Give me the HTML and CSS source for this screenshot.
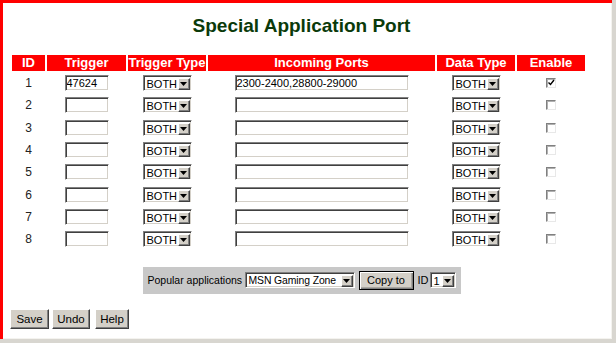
FILE: index.html
```html
<!DOCTYPE html>
<html>
<head>
<meta charset="utf-8">
<title>Special Application Port</title>
<link rel="stylesheet" href="styles.css">
</head>
<body>
<div class="window">
  <div class="frame">
    <div class="content">
      <h1 class="title">Special Application Port</h1>
      <table class="ports">
        <thead>
          <tr>
            <th class="c-id">ID</th>
            <th class="c-trig">Trigger</th>
            <th class="c-tt">Trigger Type</th>
            <th class="c-ip">Incoming Ports</th>
            <th class="c-dt">Data Type</th>
            <th class="c-en">Enable</th>
          </tr>
        </thead>
        <tbody>
          <tr>
            <td>1</td>
            <td><input class="txt trig" type="text" value="47624"></td>
            <td><span class="sel type"><span class="val">BOTH</span><span class="arrow"><svg width="7" height="4" viewBox="0 0 7 4"><path d="M0 0h7L3.5 4z" fill="#000"/></svg></span></span></td>
            <td><input class="txt ports-in" type="text" value="2300-2400,28800-29000"></td>
            <td><span class="sel type"><span class="val">BOTH</span><span class="arrow"><svg width="7" height="4" viewBox="0 0 7 4"><path d="M0 0h7L3.5 4z" fill="#000"/></svg></span></span></td>
            <td><span class="chk"><svg width="8" height="8" viewBox="0 0 8 8"><path d="M1.5 3.5l2 2 3.5-4.5" fill="none" stroke="#000" stroke-width="1.4"/></svg></span></td>
          </tr>
          <tr>
            <td>2</td>
            <td><input class="txt trig" type="text" value=""></td>
            <td><span class="sel type"><span class="val">BOTH</span><span class="arrow"><svg width="7" height="4" viewBox="0 0 7 4"><path d="M0 0h7L3.5 4z" fill="#000"/></svg></span></span></td>
            <td><input class="txt ports-in" type="text" value=""></td>
            <td><span class="sel type"><span class="val">BOTH</span><span class="arrow"><svg width="7" height="4" viewBox="0 0 7 4"><path d="M0 0h7L3.5 4z" fill="#000"/></svg></span></span></td>
            <td><span class="chk"></span></td>
          </tr>
          <tr>
            <td>3</td>
            <td><input class="txt trig" type="text" value=""></td>
            <td><span class="sel type"><span class="val">BOTH</span><span class="arrow"><svg width="7" height="4" viewBox="0 0 7 4"><path d="M0 0h7L3.5 4z" fill="#000"/></svg></span></span></td>
            <td><input class="txt ports-in" type="text" value=""></td>
            <td><span class="sel type"><span class="val">BOTH</span><span class="arrow"><svg width="7" height="4" viewBox="0 0 7 4"><path d="M0 0h7L3.5 4z" fill="#000"/></svg></span></span></td>
            <td><span class="chk"></span></td>
          </tr>
          <tr>
            <td>4</td>
            <td><input class="txt trig" type="text" value=""></td>
            <td><span class="sel type"><span class="val">BOTH</span><span class="arrow"><svg width="7" height="4" viewBox="0 0 7 4"><path d="M0 0h7L3.5 4z" fill="#000"/></svg></span></span></td>
            <td><input class="txt ports-in" type="text" value=""></td>
            <td><span class="sel type"><span class="val">BOTH</span><span class="arrow"><svg width="7" height="4" viewBox="0 0 7 4"><path d="M0 0h7L3.5 4z" fill="#000"/></svg></span></span></td>
            <td><span class="chk"></span></td>
          </tr>
          <tr>
            <td>5</td>
            <td><input class="txt trig" type="text" value=""></td>
            <td><span class="sel type"><span class="val">BOTH</span><span class="arrow"><svg width="7" height="4" viewBox="0 0 7 4"><path d="M0 0h7L3.5 4z" fill="#000"/></svg></span></span></td>
            <td><input class="txt ports-in" type="text" value=""></td>
            <td><span class="sel type"><span class="val">BOTH</span><span class="arrow"><svg width="7" height="4" viewBox="0 0 7 4"><path d="M0 0h7L3.5 4z" fill="#000"/></svg></span></span></td>
            <td><span class="chk"></span></td>
          </tr>
          <tr>
            <td>6</td>
            <td><input class="txt trig" type="text" value=""></td>
            <td><span class="sel type"><span class="val">BOTH</span><span class="arrow"><svg width="7" height="4" viewBox="0 0 7 4"><path d="M0 0h7L3.5 4z" fill="#000"/></svg></span></span></td>
            <td><input class="txt ports-in" type="text" value=""></td>
            <td><span class="sel type"><span class="val">BOTH</span><span class="arrow"><svg width="7" height="4" viewBox="0 0 7 4"><path d="M0 0h7L3.5 4z" fill="#000"/></svg></span></span></td>
            <td><span class="chk"></span></td>
          </tr>
          <tr>
            <td>7</td>
            <td><input class="txt trig" type="text" value=""></td>
            <td><span class="sel type"><span class="val">BOTH</span><span class="arrow"><svg width="7" height="4" viewBox="0 0 7 4"><path d="M0 0h7L3.5 4z" fill="#000"/></svg></span></span></td>
            <td><input class="txt ports-in" type="text" value=""></td>
            <td><span class="sel type"><span class="val">BOTH</span><span class="arrow"><svg width="7" height="4" viewBox="0 0 7 4"><path d="M0 0h7L3.5 4z" fill="#000"/></svg></span></span></td>
            <td><span class="chk"></span></td>
          </tr>
          <tr>
            <td>8</td>
            <td><input class="txt trig" type="text" value=""></td>
            <td><span class="sel type"><span class="val">BOTH</span><span class="arrow"><svg width="7" height="4" viewBox="0 0 7 4"><path d="M0 0h7L3.5 4z" fill="#000"/></svg></span></span></td>
            <td><input class="txt ports-in" type="text" value=""></td>
            <td><span class="sel type"><span class="val">BOTH</span><span class="arrow"><svg width="7" height="4" viewBox="0 0 7 4"><path d="M0 0h7L3.5 4z" fill="#000"/></svg></span></span></td>
            <td><span class="chk"></span></td>
          </tr>
        </tbody>
      </table>
      <div class="popular">
        <span class="pop-label">Popular applications</span>
        <span class="sel app"><span class="val">MSN Gaming Zone</span><span class="arrow"><svg width="7" height="4" viewBox="0 0 7 4"><path d="M0 0h7L3.5 4z" fill="#000"/></svg></span></span>
        <button class="btn copy" type="button">Copy to</button>
        <span class="id-label">ID</span>
        <span class="sel idsel"><span class="val">1</span><span class="arrow"><svg width="7" height="4" viewBox="0 0 7 4"><path d="M0 0h7L3.5 4z" fill="#000"/></svg></span></span>
      </div>
    </div>
    <div class="actions">
      <button class="btn act save" type="button">Save</button>
      <button class="btn act undo" type="button">Undo</button>
      <button class="btn act help" type="button">Help</button>
    </div>
  </div>
</div>
</body>
</html>
```

FILE: styles.css
```css
html, body {
  margin: 0;
  padding: 0;
  background: #fff;
}

body {
  font-family: "Liberation Sans", Arial, sans-serif;
}

.window {
  width: 616px;
  height: 343px;
  box-sizing: border-box;
  border-right: 4px solid #d8d6d0;
  border-bottom: 4px solid #d8d6d0;
  box-shadow: inset -1px -1px 0 #f4f3ef;
}

.frame {
  height: 100%;
  box-sizing: border-box;
  border-top: 3px solid #ff0000;
  border-left: 3px solid #ff0000;
}

.content {
  width: 583px;
  margin-left: 7px;
}

.title {
  margin: 0;
  padding-top: 12px;
  font-size: 19px;
  line-height: 22px;
  font-weight: bold;
  color: #0a3a0a;
  text-align: center;
}

.ports {
  margin-top: 16px;
  border-collapse: separate;
  border-spacing: 2px;
  table-layout: fixed;
  width: 577px;
}

.ports th {
  background: #ff0000;
  color: #fff;
  font-size: 13px;
  font-weight: bold;
  line-height: 16px;
  height: 16px;
  padding: 0;
  text-align: center;
  white-space: nowrap;
}

.c-id { width: 33px; }
.c-trig { width: 79px; }
.c-tt { width: 78px; }
.c-ip { width: 227px; }
.c-dt { width: 78px; }
.c-en { width: 68px; }

.ports td {
  height: 20.33px;
  padding: 0;
  text-align: center;
  vertical-align: middle;
  font-size: 12px;
  color: #222;
}

.txt {
  display: block;
  margin: 0 auto;
  box-sizing: border-box;
  height: 16px;
  padding: 0 1px;
  border: 1px solid;
  border-color: #808080 #ffffff #ffffff #808080;
  box-shadow: inset 1px 1px 0 #404040, inset -1px -1px 0 #d4d0c8;
  background: #fff;
  font-family: "Liberation Sans", Arial, sans-serif;
  font-size: 11px;
  color: #000;
  outline: none;
}

.trig { width: 44px; }
.ports-in { width: 174px; }

.sel {
  display: flex;
  box-sizing: border-box;
  height: 16px;
  border: 1px solid;
  border-color: #808080 #ffffff #ffffff #808080;
  box-shadow: inset 1px 1px 0 #404040, inset -1px -1px 0 #d4d0c8;
  background: #fff;
  padding: 2px 1px 1px 2px;
  text-align: left;
}

.sel .val {
  flex: 1;
  min-width: 0;
  font-size: 11px;
  line-height: 12px;
  color: #000;
  padding-left: 1px;
  white-space: nowrap;
  overflow: hidden;
}

.sel .arrow {
  flex: none;
  width: 12px;
  height: 12px;
  box-sizing: border-box;
  background: #d4d0c8;
  border: 1px solid;
  border-color: #ffffff #404040 #404040 #ffffff;
  box-shadow: inset -1px -1px 0 #808080;
  display: flex;
  align-items: center;
  justify-content: center;
}

.sel .arrow svg {
  display: block;
  margin: 0 1px 0 0;
}

.type {
  width: 49px;
  margin: 0 auto;
}

.chk {
  display: block;
  margin: 0 auto;
  width: 10px;
  height: 10px;
  box-sizing: border-box;
  border: 1px solid;
  border-color: #808080 #e8e8e8 #e8e8e8 #808080;
  box-shadow: inset 1px 1px 0 #b0b0b0;
  background: #fff;
}

.chk svg {
  display: block;
  margin: 0;
}

.popular {
  display: flex;
  align-items: center;
  box-sizing: border-box;
  width: 318px;
  height: 27px;
  margin: 15px auto 0;
  padding-left: 5px;
  background: #c8c8c8;
  font-size: 10.5px;
  color: #000;
}

.pop-label {
  white-space: nowrap;
  width: 97px;
}

.app {
  width: 110px;
}

.app .val {
  font-size: 10.4px;
  letter-spacing: -0.1px;
}

.btn {
  font-family: "Liberation Sans", Arial, sans-serif;
  background: #d4d0c8;
  color: #000;
  border: 1px solid;
  border-color: #ffffff #404040 #404040 #ffffff;
  box-shadow: inset -1px -1px 0 #808080;
  padding: 0;
  margin: 0;
  cursor: default;
}

.copy {
  margin-left: 4px;
  width: 55px;
  height: 19px;
  font-size: 11px;
  border: 1px solid #000;
  box-shadow: inset 1px 1px 0 #ffffff, inset -1px -1px 0 #808080, inset -2px -2px 0 #a8a6a0;
}

.id-label {
  margin-left: 4px;
  font-size: 11px;
  width: 12px;
}

.idsel {
  width: 26px;
}

.actions {
  display: flex;
  gap: 3px;
  margin-top: 15px;
  padding-left: 7px;
}

.act {
  height: 20px;
  font-size: 11.5px;
}

.save { width: 39px; }
.undo { width: 38px; margin-right: 2px; }
.help { width: 34px; }
```
